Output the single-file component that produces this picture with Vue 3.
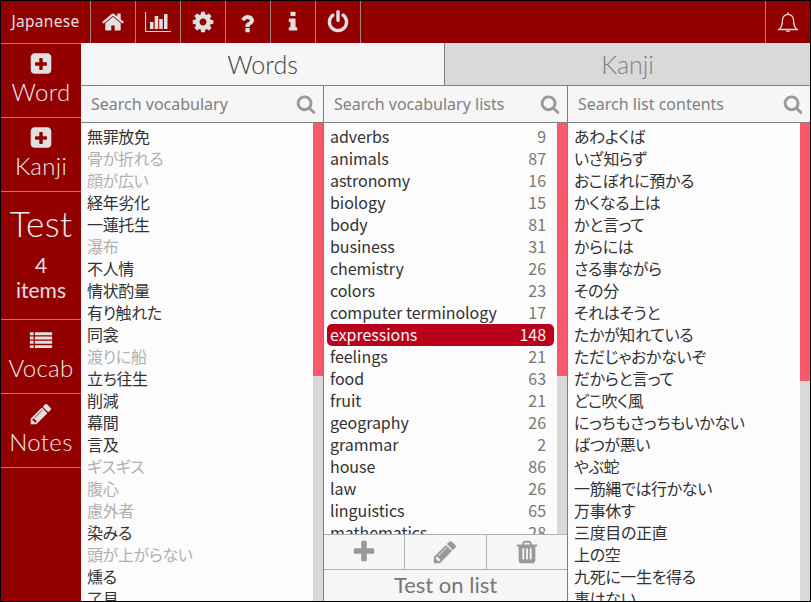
<script setup>
const icons = {
  home: "M1472 992v480q0 26-19 45t-45 19h-384v-384h-256v384h-384q-26 0-45-19t-19-45v-480q0-1 .5-3t.5-3l575-474 575 474q1 2 1 6zm223-69l-62 74q-8 9-21 11h-3q-13 0-21-7l-692-577-692 577q-12 8-24 7-13-2-21-11l-62-74q-8-10-7-23.500t11-21.500l719-599q32-26 76-26t76 26l244 204v-195q0-14 9-23t23-9h192q14 0 23 9t9 23v408l219 182q10 8 11 21.500t-7 23.500z",
  cog: "M1152 896q0-106-75-181t-181-75-181 75-75 181 75 181 181 75 181-75 75-181zm512-109v222q0 12-8 23t-20 13l-185 28q-19 54-39 91 35 50 107 138 10 12 10 25t-9 23q-27 37-99 108t-94 71q-12 0-26-9l-138-108q-44 23-91 38-16 136-29 186-7 28-36 28h-222q-14 0-24.500-8.500t-11.500-21.500l-28-184q-49-16-90-37l-141 107q-10 9-25 9-14 0-25-11-126-114-165-168-7-10-7-23 0-12 8-23 15-21 51-66.500t54-70.500q-27-50-41-99l-183-27q-13-2-21-12.500t-8-23.500v-222q0-12 8-23t19-13l186-28q14-46 39-92-40-57-107-138-10-12-10-24 0-10 9-23 26-36 98.500-107.500t94.500-71.500q13 0 26 10l138 107q44-23 91-38 16-136 29-186 7-28 36-28h222q14 0 24.500 8.500t11.500 21.500l28 184q49 16 90 37l142-107q9-9 24-9 13 0 25 10 129 119 165 170 7 8 7 22 0 12-8 23-15 21-51 66.500t-54 70.500q26 50 41 98l183 28q13 2 21 12.500t8 23.500z",
  question: "M1024 1376v240q0 16-12 28t-28 12h-240q-16 0-28-12t-12-28v-240q0-16 12-28t28-12h240q16 0 28 12t12 28zm316-600q0 54-15.500 101t-35 76.500-55 59.500-57.500 43.500-61 35.500q-41 23-68.500 65t-27.500 67q0 17-12 32.500t-28 15.500h-240q-15 0-25.500-18.500t-10.500-37.500v-45q0-83 65-156.500t143-108.500q59-27 84-56t25-76q0-42-46.500-74t-107.500-32q-65 0-108 29-35 25-107 115-13 16-31 16-12 0-25-8l-164-125q-13-10-15.500-25t5.500-28q160-266 464-266 80 0 161 31t146 83 106 127.500 41 158.500z",
  info: "M1216 1344v128q0 26-19 45t-45 19h-512q-26 0-45-19t-19-45v-128q0-26 19-45t45-19h64v-384h-64q-26 0-45-19t-19-45v-128q0-26 19-45t45-19h384q26 0 45 19t19 45v576h64q26 0 45 19t19 45zm-128-1152v192q0 26-19 45t-45 19h-256q-26 0-45-19t-19-45v-192q0-26 19-45t45-19h256q26 0 45 19t19 45z",
  power: "M1664 896q0 156-61 298t-164 245-245 164-298 61-298-61-245-164-164-245-61-298q0-182 80.500-343t226.500-270q43-32 95.500-25t83.500 50q32 42 24.500 94.500t-49.500 84.500q-98 74-151.500 181t-53.500 228q0 104 40.500 198.500t109.500 163.500 163.500 109.500 198.500 40.500 198.500-40.500 163.500-109.500 109.500-163.500 40.500-198.500q0-121-53.500-228t-151.500-181q-42-32-49.500-84.500t24.500-94.500q31-43 84-50t95 25q146 109 226.500 270t80.500 343zm-640-768v640q0 52-38 90t-90 38-90-38-38-90v-640q0-52 38-90t90-38 90 38 38 90z",
  plusSquare: "M1344 960v-128q0-26-19-45t-45-19h-256v-256q0-26-19-45t-45-19h-128q-26 0-45 19t-19 45v256h-256q-26 0-45 19t-19 45v128q0 26 19 45t45 19h256v256q0 26 19 45t45 19h128q26 0 45-19t19-45v-256h256q26 0 45-19t19-45zm320-576v960q0 119-84.500 203.500t-203.500 84.500h-960q-119 0-203.500-84.500t-84.500-203.500v-960q0-119 84.500-203.500t203.500-84.500h960q119 0 203.500 84.500t84.500 203.500z",
  list: "M64 320h280v220h-280zM440 320h1288v220h-1288zM64 640h280v220h-280zM440 640h1288v220h-1288zM64 960h280v220h-280zM440 960h1288v220h-1288zM64 1280h280v220h-280zM440 1280h1288v220h-1288z",
  pencil: "M491 1536l91-91-235-235-91 91v107h128v128h107zm523-928q0-22-22-22-10 0-17 7l-542 542q-7 7-7 17 0 22 22 22 10 0 17-7l542-542q7-7 7-17zm-54-192l416 416-832 832h-416v-416zm683 96q0 53-37 90l-166 166-416-416 166-165q36-38 90-38 53 0 91 38l235 234q37 39 37 91z",
  search: "M1216 832q0-185-131.500-316.500t-316.500-131.500-316.500 131.500-131.500 316.500 131.500 316.500 316.500 131.500 316.500-131.500 131.500-316.500zm512 832q0 52-38 90t-90 38q-54 0-90-38l-343-342q-179 124-399 124-143 0-273.500-55.500t-225-150-150-225-55.500-273.500 55.500-273.500 150-225 225-150 273.500-55.500 273.500 55.500 225 150 150 225 55.500 273.500q0 220-124 399l343 343q37 37 37 90z",
  plus: "M1600 736v192q0 40-28 68t-68 28h-416v416q0 40-28 68t-68 28h-192q-40 0-68-28t-28-68v-416h-416q-40 0-68-28t-28-68v-192q0-40 28-68t68-28h416v-416q0-40 28-68t68-28h192q40 0 68 28t28 68v416h416q40 0 68 28t28 68z",
  trash: "M704 1376v-704q0-14-9-23t-23-9h-64q-14 0-23 9t-9 23v704q0 14 9 23t23 9h64q14 0 23-9t9-23zm256 0v-704q0-14-9-23t-23-9h-64q-14 0-23 9t-9 23v704q0 14 9 23t23 9h64q14 0 23-9t9-23zm256 0v-704q0-14-9-23t-23-9h-64q-14 0-23 9t-9 23v704q0 14 9 23t23 9h64q14 0 23-9t9-23zm-544-992h448l-48-117q-7-9-17-11h-317q-10 2-17 11zm928 32v64q0 14-9 23t-23 9h-96v948q0 83-47 143.500t-113 60.500h-832q-66 0-113-58.500t-47-141.500v-952h-96q-14 0-23-9t-9-23v-64q0-14 9-23t23-9h309l70-167q15-37 54-63t79-26h320q40 0 79 26t54 63l70 167h309q14 0 23 9t9 23z",
};

const sideItems = [
  { icon: "plusSquare", label: "Word" },
  { icon: "plusSquare", label: "Kanji" },
  { icon: "list", label: "Vocab" },
  { icon: "pencil", label: "Notes" },
];

// faded = word not yet due
const words = [
  ["無罪放免"], ["骨が折れる", true], ["顔が広い", true], ["経年劣化"], ["一蓮托生"],
  ["瀑布", true], ["不人情"], ["情状酌量"], ["有り触れた"], ["同衾"],
  ["渡りに船", true], ["立ち往生"], ["削減"], ["幕間"], ["言及"],
  ["ギスギス", true], ["腹心", true], ["慮外者", true], ["染みる"], ["頭が上がらない", true],
  ["燻る"], ["了見"],
];

const lists = [
  ["adverbs", 9], ["animals", 87], ["astronomy", 16], ["biology", 15], ["body", 81],
  ["business", 31], ["chemistry", 26], ["colors", 23], ["computer terminology", 17],
  ["expressions", 148], ["feelings", 21], ["food", 63], ["fruit", 21], ["geography", 26],
  ["grammar", 2], ["house", 86], ["law", 26], ["linguistics", 65], ["mathematics", 28],
];

const contents = [
  "あわよくば", "いざ知らず", "おこぼれに預かる", "かくなる上は", "かと言って", "からには",
  "さる事ながら", "その分", "それはそうと", "たかが知れている", "ただじゃおかないぞ",
  "だからと言って", "どこ吹く風", "にっちもさっちもいかない", "ばつが悪い", "やぶ蛇",
  "一筋縄では行かない", "万事休す", "三度目の正直", "上の空", "九死に一生を得る", "事はない",
];
</script>

<template>
  <div class="app">
    <header class="topbar">
      <div class="lang">Japanese</div>
      <div class="top-btn">
        <svg class="top-icon" viewBox="0 0 1792 1792"><path :d="icons.home" /></svg>
      </div>
      <div class="top-btn">
        <svg class="chart" viewBox="0 0 26 20">
          <path d="M0 0h1.100v18.900h24.900v1.100h-26zM5 10h3.500v7h-3.500zM9.700 4h3.500v13h-3.500zM14.200 7h3.500v10h-3.500zM19 2h3.500v15h-3.500z" />
        </svg>
      </div>
      <div class="top-btn">
        <svg class="top-icon" viewBox="0 0 1792 1792"><path :d="icons.cog" /></svg>
      </div>
      <div class="top-btn">
        <svg class="top-icon" viewBox="0 0 1792 1792"><path :d="icons.question" /></svg>
      </div>
      <div class="top-btn">
        <svg class="top-icon" viewBox="0 0 1792 1792"><path :d="icons.info" /></svg>
      </div>
      <div class="top-btn">
        <svg class="top-icon" viewBox="0 0 1792 1792"><path :d="icons.power" /></svg>
      </div>
      <div class="top-space"></div>
      <div class="bell-btn">
        <svg class="bell" viewBox="0 0 24 24">
          <path d="M3 19.500c2.600-2.500 3.400-5 3.400-8.800 0-3.600 2.300-6.400 5.600-6.400s5.600 2.800 5.600 6.400c0 3.800.8 6.300 3.400 8.800z" />
          <path d="M12 4.200v-2M10.200 20.500a2 1.600 0 0 0 3.600 0" />
        </svg>
      </div>
    </header>

    <div class="body">
      <nav class="sidebar">
        <div v-for="item in sideItems.slice(0, 2)" :key="item.label" class="side-item">
          <svg class="side-icon" viewBox="0 0 1792 1792"><path :d="icons[item.icon]" /></svg>
          <span>{{ item.label }}</span>
        </div>
        <div class="side-test">
          <div class="test-title">Test</div>
          <div class="test-count first">4</div>
          <div class="test-count">items</div>
        </div>
        <div v-for="item in sideItems.slice(2)" :key="item.label" class="side-item">
          <svg class="side-icon" viewBox="0 0 1792 1792"><path :d="icons[item.icon]" /></svg>
          <span>{{ item.label }}</span>
        </div>
      </nav>

      <main class="main">
        <div class="tabs">
          <div class="tab active">Words</div>
          <div class="tab">Kanji</div>
        </div>

        <div class="columns">
          <section class="column">
            <div class="search">
              <span>Search vocabulary</span>
              <svg class="search-icon" viewBox="0 0 1792 1792"><path :d="icons.search" /></svg>
            </div>
            <div class="list-wrap">
              <ul class="list">
                <li v-for="w in words" :key="w[0]" class="row" :class="{ faded: w[1] }" lang="ja">{{ w[0] }}</li>
              </ul>
              <div class="scroll"><div class="thumb" :style="{ height: '253px' }"></div></div>
            </div>
          </section>

          <section class="column">
            <div class="search">
              <span>Search vocabulary lists</span>
              <svg class="search-icon" viewBox="0 0 1792 1792"><path :d="icons.search" /></svg>
            </div>
            <div class="list-wrap">
              <ul class="list lists">
                <li v-for="l in lists" :key="l[0]" class="row list-row" :class="{ selected: l[0] === 'expressions' }">
                  <span>{{ l[0] }}</span><span class="count">{{ l[1] }}</span>
                </li>
              </ul>
              <div class="scroll"><div class="thumb" :style="{ height: '253px' }"></div></div>
            </div>
            <div class="actions">
              <div class="action-row">
                <div class="action"><svg class="action-icon" viewBox="0 0 1792 1792"><path :d="icons.plus" /></svg></div>
                <div class="action"><svg class="action-icon" viewBox="0 0 1792 1792"><path :d="icons.pencil" /></svg></div>
                <div class="action"><svg class="action-icon" viewBox="0 0 1792 1792"><path :d="icons.trash" /></svg></div>
              </div>
              <div class="test-list">Test on list</div>
            </div>
          </section>

          <section class="column">
            <div class="search">
              <span>Search list contents</span>
              <svg class="search-icon" viewBox="0 0 1792 1792"><path :d="icons.search" /></svg>
            </div>
            <div class="list-wrap">
              <ul class="list">
                <li v-for="c in contents" :key="c" class="row" lang="ja">{{ c }}</li>
              </ul>
              <div class="scroll"><div class="thumb" :style="{ height: '258px' }"></div></div>
            </div>
          </section>
        </div>
      </main>
    </div>
  </div>
</template>

<style>
html,
body {
  margin: 0;
  overflow: hidden;
}
</style>

<style scoped>
.app {
  width: 811px;
  height: 602px;
  box-sizing: border-box;
  border: 1px solid #000;
  display: flex;
  flex-direction: column;
  overflow: hidden;
  font-family: "Noto Sans", "Noto Sans CJK JP", sans-serif;
  background: #fcfcfc;
}

.topbar {
  height: 42px;
  flex: none;
  display: flex;
  background: #930000;
  color: #e0e0e0;
}

.lang {
  width: 90px;
  box-sizing: border-box;
  border-right: 1px solid #a58080;
  text-align: center;
  font-size: 15.500px;
  line-height: 41px;
  letter-spacing: 0.3px;
}

.top-btn {
  width: 45px;
  box-sizing: border-box;
  border-right: 1px solid #a58080;
  display: flex;
  align-items: center;
  justify-content: center;
}

.top-icon {
  width: 24px;
  height: 24px;
  fill: #e0e0e0;
}

.chart {
  width: 26px;
  height: 20px;
  fill: #e0e0e0;
}

.top-space {
  flex: 1;
}

.bell-btn {
  width: 45px;
  box-sizing: border-box;
  border-left: 1px solid #a58080;
  display: flex;
  align-items: center;
  justify-content: center;
}

.bell {
  width: 24px;
  height: 24px;
  fill: none;
  stroke: #e0e0e0;
  stroke-width: 1.3;
}

.body {
  flex: 1;
  display: flex;
  min-height: 0;
}

.sidebar {
  width: 80px;
  flex: none;
  background: #930000;
  color: #ebebeb;
  font-family: Lato, sans-serif;
  font-weight: 300;
  border-top: 1px solid #a58080;
}

.side-item {
  height: 73px;
  border-bottom: 1px solid #a58080;
  display: flex;
  flex-direction: column;
  align-items: center;
  font-size: 24px;
  line-height: 31px;
  letter-spacing: 0.3px;
}

.side-icon {
  width: 24px;
  height: 24px;
  margin-top: 8px;
  fill: #e0e0e0;
  flex: none;
}

.side-test {
  height: 128px;
  box-sizing: border-box;
  padding-top: 12px;
  border-bottom: 1px solid #a58080;
  text-align: center;
}

.test-title {
  font-size: 35px;
  line-height: 38px;
  letter-spacing: 0.4px;
}

.test-count {
  font-size: 21px;
  line-height: 25px;
  font-weight: 400;
  color: #e0e0e0;
}

.test-count.first {
  margin-top: 10px;
}

.main {
  flex: 1;
  min-width: 0;
  display: flex;
  flex-direction: column;
}

.tabs {
  height: 42px;
  flex: none;
  display: flex;
  font-family: Lato, sans-serif;
  font-size: 25px;
  font-weight: 300;
}

.tab {
  flex: 1;
  text-align: center;
  line-height: 42px;
  background: #d9d9d9;
  color: #808080;
}

.tab.active {
  background: #f6f6f6;
  color: #444;
  border-right: 1px solid #808080;
  flex: none;
  width: 363px;
}

.columns {
  flex: 1;
  min-height: 0;
  display: grid;
  grid-template-columns: 243px 244px 1fr;
}

.column {
  display: flex;
  flex-direction: column;
  min-height: 0;
  border-right: 1px solid #808080;
  border-top: 1px solid #808080;
}

.column:last-child {
  border-right: none;
}

.search {
  height: 36px;
  flex: none;
  border-bottom: 1px solid #808080;
  background: #f6f6f6;
  display: flex;
  align-items: center;
  justify-content: space-between;
  padding: 0 7px 0 10px;
  font-size: 16px;
  color: #808080;
}

.search-icon {
  width: 20px;
  height: 20px;
  fill: #999;
}

.list-wrap {
  flex: 1;
  min-height: 0;
  display: flex;
  overflow: hidden;
}

.list {
  flex: 1;
  min-width: 0;
  margin: 0;
  padding: 3px 0 0;
  list-style: none;
  overflow: hidden;
  font-family: "Noto Sans CJK JP", "Noto Sans", sans-serif;
  font-feature-settings: "palt";
}

.row {
  height: 22px;
  line-height: 21px;
  padding: 0 6px;
  font-size: 16px;
  letter-spacing: -0.35px;
  color: #333;
  white-space: nowrap;
}

.row.faded {
  color: #b0b0b0;
}

.lists {
  padding-left: 3px;
  padding-right: 3px;
}

.list-row {
  display: flex;
  justify-content: space-between;
  padding: 0 8px 0 3px;
  letter-spacing: -0.05px;
}

.count {
  color: #777;
}

.selected {
  background: #bb001b;
  color: #f6f6f6;
  border-radius: 5px;
}

.selected .count {
  color: #f6f6f6;
}

.scroll {
  width: 10px;
  flex: none;
  background: #d9d9d9;
}

.thumb {
  background: #f9596a;
}

.actions {
  flex: none;
  background: #f6f6f6;
  border-top: 1px solid #b0b0b0;
}

.action-row {
  height: 34px;
  display: flex;
  border-bottom: 1px solid #b0b0b0;
}

.action {
  flex: 1;
  display: flex;
  align-items: center;
  justify-content: center;
  border-right: 1px solid #b0b0b0;
}

.action:last-child {
  border-right: none;
}

.action-icon {
  width: 26px;
  height: 26px;
  fill: #999;
}

.test-list {
  height: 31px;
  line-height: 29px;
  text-align: center;
  font-family: Lato, sans-serif;
  font-size: 22px;
  color: #777;
}
</style>
